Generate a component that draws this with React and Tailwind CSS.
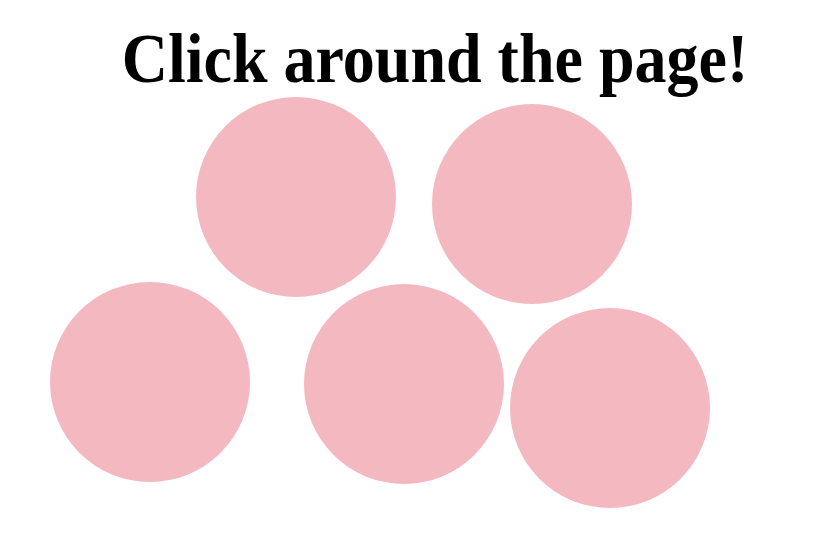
const circles = [
  { x: 196, y: 97 },
  { x: 432, y: 104 },
  { x: 50, y: 282 },
  { x: 304, y: 284 },
  { x: 510, y: 308 },
];

export default function App() {
  return (
    <div className="relative w-full h-[536px] bg-white overflow-hidden">
      <h1 className="mt-[24px] pl-[32px] text-center text-[64px] font-bold text-black font-['Liberation_Serif',serif] leading-none origin-top scale-y-[1.09]">
        Click around the page!
      </h1>
      {circles.map((c, i) => (
        <div
          key={i}
          className="absolute w-[200px] h-[200px] rounded-full bg-[#f4b8c1]"
          style={{ left: c.x, top: c.y }}
        />
      ))}
    </div>
  );
}
